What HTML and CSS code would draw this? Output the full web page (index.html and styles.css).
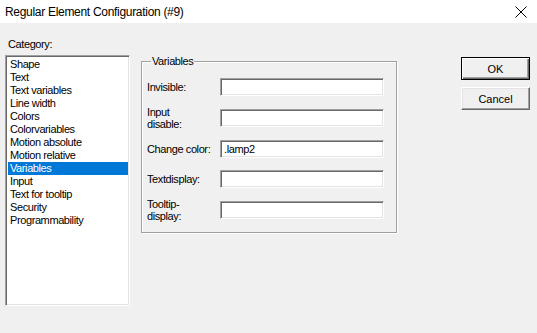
FILE: index.html
```html
<!DOCTYPE html>
<html>
<head>
<meta charset="utf-8">
<link rel="stylesheet" href="styles.css">
</head>
<body>
<div class="titlebar">
  <span class="title">Regular Element Configuration (#9)</span>
  <svg class="close" width="12" height="12" viewBox="0 0 12 12"><path d="M0.5 0.5 L11.5 11.5 M11.5 0.5 L0.5 11.5" stroke="#000" stroke-width="1" fill="none"/></svg>
</div>
<div class="content">
  <div class="category">
    <div class="cat-label">Category:</div>
    <ul class="list">
      <li>Shape</li>
      <li>Text</li>
      <li>Text variables</li>
      <li>Line width</li>
      <li>Colors</li>
      <li>Colorvariables</li>
      <li>Motion absolute</li>
      <li>Motion relative</li>
      <li class="selected">Variables</li>
      <li>Input</li>
      <li>Text for tooltip</li>
      <li>Security</li>
      <li>Programmability</li>
    </ul>
  </div>
  <fieldset class="group">
    <legend>Variables</legend>
    <div class="rows">
      <label>Invisible:</label><div class="field"></div>
      <label>Input<br>disable:</label><div class="field"></div>
      <label>Change color:</label><div class="field">.lamp2</div>
      <label>Textdisplay:</label><div class="field"></div>
      <label>Tooltip-<br>display:</label><div class="field"></div>
    </div>
  </fieldset>
  <div class="buttons">
    <div class="btn default"><span>OK</span></div>
    <div class="btn"><span>Cancel</span></div>
  </div>
</div>
</body>
</html>
```
FILE: styles.css
```css
html, body {
  margin: 0;
  padding: 0;
  width: 537px;
  height: 333px;
  background: #f0f0f0;
  overflow: hidden;
  font-family: "Liberation Sans", Arial, sans-serif;
  font-size: 11px;
  color: #000;
}
.titlebar {
  height: 23px;
  background: #fff;
  display: flex;
  align-items: center;
  justify-content: space-between;
  padding: 0 10px 0 5px;
}
.title {
  font-size: 12px;
  letter-spacing: -0.3px;
  padding-top: 1px;
}
.close {
  display: block;
}
.content {
  display: flex;
  align-items: flex-start;
  padding: 14px 0 0 5px;
  letter-spacing: -0.4px;
}
.category {
  width: 125px;
}
.cat-label {
  height: 18px;
  padding-left: 3px;
  line-height: 14px;
}
.list {
  list-style: none;
  margin: 0;
  padding: 2px 0 0 0;
  background: #fff;
  border: 1px solid;
  border-color: #a0a0a0 #fff #fff #a0a0a0;
  box-shadow: inset 1px 1px 0 #696969, inset -1px -1px 0 #e3e3e3;
  box-sizing: border-box;
  height: 251px;
}
.list li {
  height: 13px;
  line-height: 13px;
  margin: 0 1px 0 2px;
  padding-left: 2px;
}
.list li.selected {
  background: #0078d7;
  color: #fff;
}
.group {
  margin: 18px 0 0 11px;
  padding: 10px 0 10px 5px;
  width: 256px;
  border: 1px solid #a0a0a0;
  box-shadow: 1px 1px 0 #fff, inset 1px 1px 0 #fff;
  height: 178px;
  box-sizing: border-box;
}
.group legend {
  padding: 0 1px;
  margin-left: 4px;
  line-height: 13px;
}
.rows {
  display: grid;
  grid-template-columns: 73px 164px;
  grid-auto-rows: 18px;
  row-gap: 12.75px;
  align-items: center;
}
.rows label {
  line-height: 12px;
  white-space: nowrap;
}
.field {
  height: 18px;
  box-sizing: border-box;
  background: #fff;
  border: 1px solid;
  border-color: #a0a0a0 #fff #fff #a0a0a0;
  box-shadow: inset 1px 1px 0 #696969, inset -1px -1px 0 #e3e3e3;
  padding: 0 0 0 3px;
  line-height: 16px;
}
.buttons {
  margin: 20px 0 0 64px;
  display: flex;
  flex-direction: column;
  gap: 7px;
}
.btn {
  width: 69px;
  height: 23px;
  box-sizing: border-box;
  border: 1px solid;
  border-color: #fff #696969 #696969 #fff;
  box-shadow: inset -1px -1px 0 #a0a0a0, inset 1px 1px 0 #e3e3e3;
  display: flex;
  align-items: center;
  justify-content: center;
  letter-spacing: 0;
}
.btn.default {
  border: 1px solid #000;
  box-shadow: inset 1px 1px 0 #fff, inset -1px -1px 0 #696969, inset -2px -2px 0 #a0a0a0;
}
```
